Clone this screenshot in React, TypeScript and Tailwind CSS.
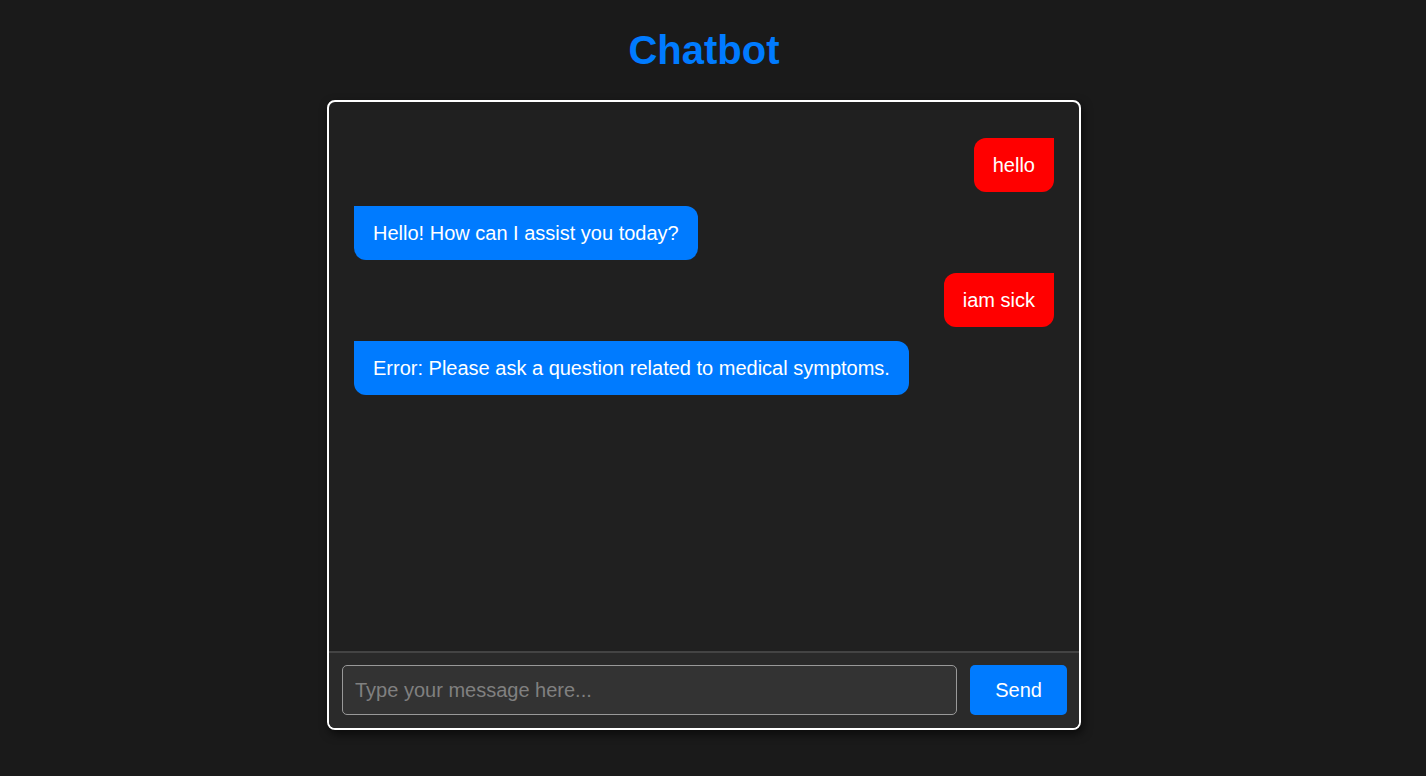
import { useState } from 'react'

type Msg = { from: 'user' | 'bot'; text: string }

const initial: Msg[] = [
  { from: 'user', text: 'hello' },
  { from: 'bot', text: 'Hello! How can I assist you today?' },
  { from: 'user', text: 'iam sick' },
  { from: 'bot', text: 'Error: Please ask a question related to medical symptoms.' },
]

export default function App() {
  const [messages] = useState<Msg[]>(initial)
  const [input, setInput] = useState('')

  return (
    <div
      className="min-h-screen w-full bg-[#1a1a1a] pr-[18px]"
      style={{ fontFamily: '"Liberation Sans", Arial, sans-serif' }}
    >
      <div className="flex flex-col items-center">
        <h1 className="mt-[27px] mb-[27px] text-[40px] leading-[46px] font-bold text-[#007bff]">Chatbot</h1>

        <div className="flex h-[630px] w-[754px] flex-col overflow-hidden rounded-[8px] border-2 border-white bg-[#202020] shadow-[2px_4px_10px_rgba(0,0,0,0.6)]">
          <div className="flex flex-1 flex-col gap-[13.6px] overflow-y-auto px-[25px] pt-[36px]">
            {messages.map((m, i) =>
              m.from === 'user' ? (
                <div key={i} className="flex justify-end">
                  <div className="rounded-[12px] rounded-tr-none bg-[#ff0000] px-[19px] py-[15px] text-[20px] leading-[24px] text-white">
                    {m.text}
                  </div>
                </div>
              ) : (
                <div key={i} className="flex justify-start">
                  <div className="rounded-[12px] rounded-tl-none bg-[#007bff] px-[19px] py-[15px] text-[20px] leading-[24px] text-white">
                    {m.text}
                  </div>
                </div>
              )
            )}
          </div>

          <div className="flex gap-[13px] border-t-2 border-[#444] bg-[#2a2a2a] pt-3 pb-[13px] pl-[13px] pr-3">
            <input
              value={input}
              onChange={e => setInput(e.target.value)}
              placeholder="Type your message here..."
              className="h-[50px] flex-1 rounded-[5px] border border-[#999] bg-[#333] px-3 text-[20px] text-white outline-none placeholder:text-[#808080]"
            />
            <button className="h-[50px] rounded-[5px] bg-[#007bff] px-[25px] text-[20px] text-white">
              Send
            </button>
          </div>
        </div>
      </div>
    </div>
  )
}
